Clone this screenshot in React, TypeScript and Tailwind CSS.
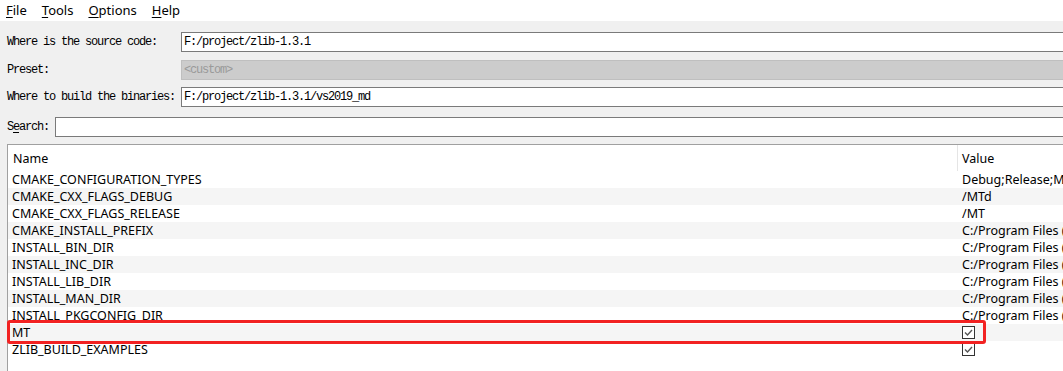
import React from "react";

const mono = { fontFamily: '"Liberation Mono", "DejaVu Sans Mono", monospace' };

const rows: { name: string; value: string; check?: boolean }[] = [
  { name: "CMAKE_CONFIGURATION_TYPES", value: "Debug;Release;MinSizeRel;RelWithDebInfo" },
  { name: "CMAKE_CXX_FLAGS_DEBUG", value: "/MTd" },
  { name: "CMAKE_CXX_FLAGS_RELEASE", value: "/MT" },
  { name: "CMAKE_INSTALL_PREFIX", value: "C:/Program Files (x86)/zlib" },
  { name: "INSTALL_BIN_DIR", value: "C:/Program Files (x86)/zlib/bin" },
  { name: "INSTALL_INC_DIR", value: "C:/Program Files (x86)/zlib/include" },
  { name: "INSTALL_LIB_DIR", value: "C:/Program Files (x86)/zlib/lib" },
  { name: "INSTALL_MAN_DIR", value: "C:/Program Files (x86)/zlib/share/man" },
  { name: "INSTALL_PKGCONFIG_DIR", value: "C:/Program Files (x86)/zlib/share/pkgconfig" },
  { name: "MT", value: "", check: true },
  { name: "ZLIB_BUILD_EXAMPLES", value: "", check: true },
];

function CheckBox() {
  return (
    <div className="w-[13px] h-[13px] border border-[#333333] bg-white flex items-center justify-center">
      <svg width="11" height="11" viewBox="0 0 11 11">
        <path d="M2 5.5 L4.5 8 L9 3" fill="none" stroke="#555555" strokeWidth="1.4" />
      </svg>
    </div>
  );
}

function MenuItem({ first, rest }: { first: string; rest: string }) {
  return (
    <span>
      <span className="underline underline-offset-[2px]">{first}</span>
      {rest}
    </span>
  );
}

export default function App() {
  return (
    <div
      className="w-[1063px] h-[371px] overflow-hidden bg-[#f0f0f0] text-black flex flex-col"
      style={{ fontFamily: '"Noto Sans", "Segoe UI", sans-serif' }}
    >
      {/* Menu bar */}
      <div className="h-[21px] bg-white flex items-center pl-[6px] gap-[15px] text-[13px] leading-none shrink-0">
        <MenuItem first="F" rest="ile" />
        <MenuItem first="T" rest="ools" />
        <MenuItem first="O" rest="ptions" />
        <MenuItem first="H" rest="elp" />
      </div>

      {/* Form */}
      <div className="flex flex-col pl-[7px] pt-[11px] text-[12px] tracking-[-1.2px]" style={mono}>
        <div className="flex items-center h-[20px]">
          <div className="w-[174px]">Where is the source code:</div>
          <div className="flex-1 -mr-[10px] h-[20px] bg-white border border-[#7a7a7a] flex items-center pl-[2px]">
            F:/project/zlib-1.3.1
          </div>
        </div>
        <div className="flex items-center h-[20px] mt-[8px]">
          <div className="w-[174px]">Preset:</div>
          <div className="flex-1 -mr-[10px] h-[20px] bg-[#cccccc] border border-[#bfbfbf] flex items-center pl-[2px] text-[#9a9a9a]">
            &lt;custom&gt;
          </div>
        </div>
        <div className="flex items-center h-[20px] mt-[7px]">
          <div className="w-[174px]">Where to build the binaries:</div>
          <div className="flex-1 -mr-[10px] h-[20px] bg-white border border-[#7a7a7a] flex items-center pl-[2px]">
            F:/project/zlib-1.3.1/vs2019_md
          </div>
        </div>
        <div className="flex items-center h-[20px] mt-[10px]">
          <div className="w-[48px]">
            S<span className="underline underline-offset-[2px]">e</span>arch:
          </div>
          <div className="flex-1 -mr-[10px] h-[20px] bg-white border border-[#7a7a7a]" />
        </div>
      </div>

      {/* Table */}
      <div className="relative ml-[7px] -mr-[10px] mt-[7px] flex-1 bg-white border-l border-t border-[#a0a0a0] text-[12.5px]">
        <div className="flex h-[26px]">
          <div className="w-[949px] flex items-center pl-[5px] pt-[2px]">Name</div>
          <div className="w-px bg-[#e5e5e5]" />
          <div className="flex-1 flex items-center pl-[4px] pt-[2px]">Value</div>
        </div>
        {rows.map((r, i) => (
          <div
            key={r.name}
            className={`flex h-[17px] items-center ${i % 2 === 1 ? "bg-[#f5f5f5]" : "bg-white"}`}
          >
            <div className="w-[950px] pl-[4px] pt-[2px] whitespace-nowrap leading-none">{r.name}</div>
            <div className={`flex-1 pl-[4px] whitespace-nowrap overflow-hidden leading-none ${r.check ? "" : "pt-[2px]"}`}>
              {r.check ? <CheckBox /> : r.value}
            </div>
          </div>
        ))}
        <div className="absolute left-[-1px] top-[175px] w-[979px] h-[24px] border-[3px] border-[#f22222] rounded-[3px]" />
      </div>
    </div>
  );
}
